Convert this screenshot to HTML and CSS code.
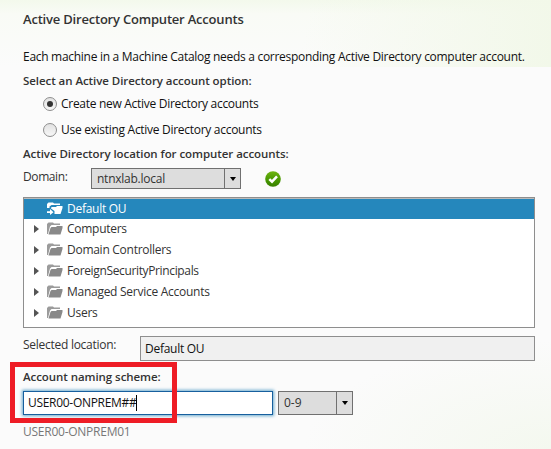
FILE: index.html
```
<!DOCTYPE html>
<html lang="en">
<head>
<meta charset="utf-8">
<title>Active Directory Computer Accounts</title>
<link rel="stylesheet" href="styles.css">
</head>
<body>
<svg class="defs" width="0" height="0" aria-hidden="true">
  <defs>
    <linearGradient id="ok-fill" x1="0" y1="0" x2="0" y2="1"><stop offset="0" stop-color="#6fb510"/><stop offset=".6" stop-color="#459500"/><stop offset="1" stop-color="#387f00"/></linearGradient>
    <symbol id="folder" viewBox="0 0 16 13"><path d="M0 12V2L1.500 .5H6L7 1.500H13V3H4.500L3 4.500L1 12Z" opacity=".85"/><path d="M4.500 5H9L10 4H15.500V6L13.500 12.500H1.500L3.500 6Z"/></symbol>
  </defs>
</svg>
<main class="page">
  <h1 class="title">Active Directory Computer Accounts</h1>
  <p class="intro">Each machine in a Machine Catalog needs a corresponding Active Directory computer account.</p>
  <h2 class="heading option-heading">Select an Active Directory account option:</h2>
  <div class="option"><span class="radio checked"></span><span>Create new Active Directory accounts</span></div>
  <div class="option"><span class="radio"></span><span>Use existing Active Directory accounts</span></div>
  <h2 class="heading location-heading">Active Directory location for computer accounts:</h2>
  <div class="domain-row">
    <span class="domain-label">Domain:</span>
    <div class="select domain"><span class="value">ntnxlab.local</span><span class="drop"></span></div>
    <svg class="ok" viewBox="0 0 16 16"><circle cx="8" cy="8" r="7.800" fill="url(#ok-fill)"/><path d="M4.300 8.100L7 10.700L12 5.300" fill="none" stroke="#fff" stroke-width="2.500"/></svg>
  </div>
  <div class="tree">
    <div class="node selected"><span class="gap"></span><svg class="folder" viewBox="0 0 16 13"><path d="M0 6V2L1.500 .5H6L7 1.500H13V3H4.500L2.500 4.500V6Z"/><path d="M4.500 5H9L10 4H15.500V6L13.500 12H7.500V9L4 6.500Z"/><path d="M0 9.200H3V7L6.500 10.200L3 13V11H0Z"/></svg><span>Default OU</span></div>
    <div class="node"><span class="arrow"></span><svg class="folder"><use href="#folder"/></svg><span>Computers</span></div>
    <div class="node"><span class="arrow"></span><svg class="folder"><use href="#folder"/></svg><span>Domain Controllers</span></div>
    <div class="node tight"><span class="arrow"></span><svg class="folder"><use href="#folder"/></svg><span>ForeignSecurityPrincipals</span></div>
    <div class="node"><span class="arrow"></span><svg class="folder"><use href="#folder"/></svg><span>Managed Service Accounts</span></div>
    <div class="node"><span class="arrow"></span><svg class="folder"><use href="#folder"/></svg><span>Users</span></div>
  </div>
  <div class="location-row"><span class="location-label">Selected location:</span><div class="readonly">Default OU</div></div>
  <h2 class="heading naming-heading">Account naming scheme:</h2>
  <div class="naming-row">
    <div class="field"><span>USER00-ONPREM##</span><i class="caret"></i></div>
    <div class="select range"><span class="value">0-9</span><span class="drop"></span></div>
  </div>
  <p class="hint">USER00-ONPREM01</p>
  <div class="highlight"></div>
</main>
</body>
</html>
```
FILE: styles.css
```
* { box-sizing: border-box; }
body { margin: 0; font: 12px/16px "Open Sans", "Noto Sans", sans-serif; color: #333; }
h1, h2, p { margin: 0; white-space: nowrap; }
.defs { position: absolute; }
.page {
  position: relative; width: 551px; height: 449px; padding: 11px 16px 0 23px; overflow: hidden;
  background:
    linear-gradient(100deg, rgba(242,248,234,0) 55%, #f2f8e9 100%) 0 0 / 551px 67px no-repeat,
    linear-gradient(#f3f9ec, #f9fbf6 14px, rgba(250,252,248,0)) 0 0 / 551px 67px no-repeat,
    radial-gradient(ellipse at 100% 100%, #f4f8ef, rgba(251,251,250,0) 70%) 100% 100% / 250px 110px no-repeat,
    #fbfbfb;
  white-space: nowrap;
}
.title { height: 38px; font-size: 13px; line-height: 16px; font-weight: 600; letter-spacing: -.2px; }
.intro { height: 24px; color: #111; letter-spacing: -.29px; }
.heading { font-size: 11.5px; line-height: 16px; font-weight: 600; letter-spacing: -.06px; }
.option-heading { height: 18px; }
.option { display: flex; align-items: center; gap: 4px; height: 26px; padding-left: 20px; color: #111; letter-spacing: -.29px; }
.radio { width: 14px; height: 14px; border: 1px solid #8e8e8e; border-radius: 50%; background: linear-gradient(#e2e2e2, #f7f7f7); display: grid; place-items: center; }
.checked::after { content: ""; width: 6px; height: 6px; border-radius: 50%; background: #333; }
.location-heading { height: 22px; padding-top: 3px; }
.domain-row { display: flex; height: 32px; padding-top: 3px; letter-spacing: -.25px; }
.domain-label { width: 68px; padding-top: 1px; letter-spacing: -.4px; }
.select { display: flex; border: 1px solid #707070; background: #ddd; }
.value { flex: 1; padding-left: 5px; }
.drop { display: grid; place-items: center; width: 16px; border-left: 1px solid #707070; }
.drop::after { content: ""; border: 3.500px solid transparent; border-top: 4px solid #000; border-bottom: 0; }
.domain { width: 150px; height: 21px; line-height: 19px; }
.ok { width: 16px; height: 16px; margin: 3px 0 0 24px; }
.tree { height: 131px; border: 1px solid #8e8e8e; background: #fff; padding-top: 1px; box-shadow: inset 0 1px #bbb; }
.node { display: flex; align-items: center; height: 21px; padding-bottom: 2px; letter-spacing: -.27px; }
.tight { letter-spacing: -.36px; }
.selected { height: 20px; padding-bottom: 1px; color: #fff; background: #2587bc; }
.gap, .arrow { width: 23px; }
.arrow::before { content: ""; display: block; width: 0; margin-left: 10px; border: 4.500px solid transparent; border-left: 5px solid #555; border-right: 0; }
.folder { width: 16px; height: 13px; margin-right: 4px; fill: #898989; }
.selected .folder { fill: #fff; }
.location-row { display: flex; height: 41px; padding-top: 8px; letter-spacing: -.27px; }
.location-label { width: 117px; padding-top: 1px; }
.readonly { flex: 1; height: 25px; padding-left: 4px; border: 1px solid #8e8e8e; background: #f0f0f0; color: #111; line-height: 23px; }
.naming-heading { height: 22px; }
.naming-row { display: flex; gap: 5px; height: 33px; }
.field { display: flex; align-items: center; width: 250px; height: 24px; padding-left: 4px; border: 1px solid #175f9e; background: #fff; color: #111; box-shadow: 0 0 3px 1px #68a8cc; letter-spacing: -.3px; }
.caret { width: 1px; height: 16px; background: #000; }
.range { width: 75px; height: 24px; line-height: 22px; }
.hint { color: #777; letter-spacing: -.25px; }
.highlight { position: absolute; left: 10px; top: 362px; width: 167px; height: 61px; border: 5px solid #ee1c25; }
```
